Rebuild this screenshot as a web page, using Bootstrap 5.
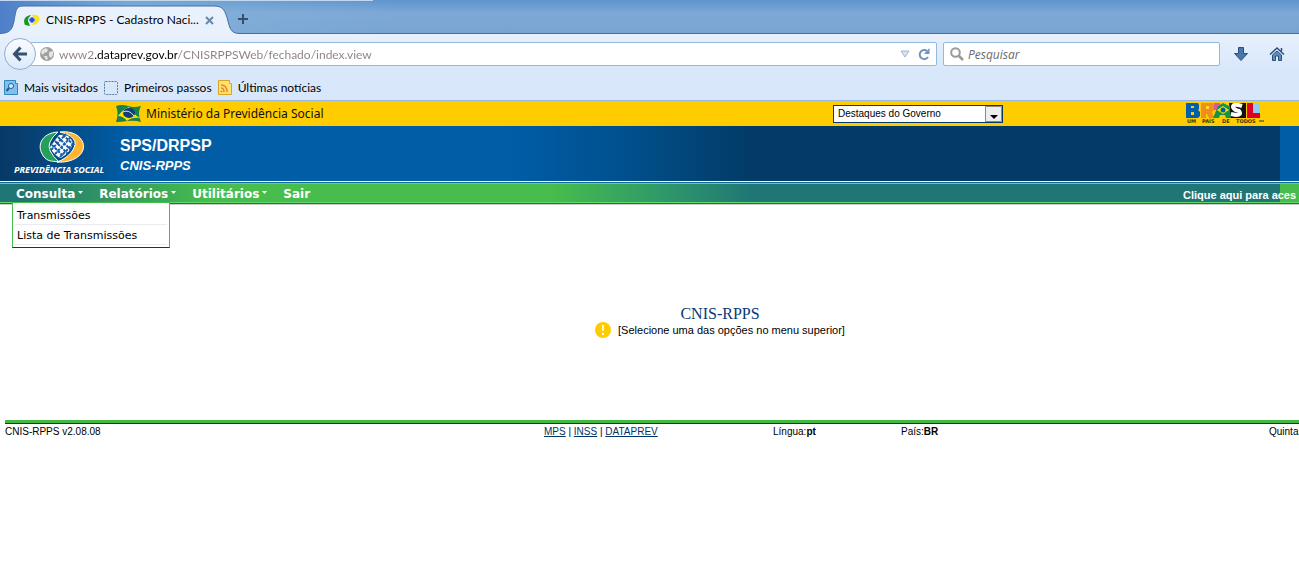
<!DOCTYPE html>
<html lang="pt-BR">
<head>
<meta charset="utf-8">
<meta name="viewport" content="width=device-width, initial-scale=1">
<title>CNIS-RPPS - Cadastro Nacional</title>
<link rel="stylesheet" href="https://cdn.jsdelivr.net/npm/bootstrap@5.3.0/dist/css/bootstrap.min.css">
<style>
  body { background: #fff; color: #000; overflow-x: hidden; font-family: "Liberation Sans", Arial, sans-serif; font-size: 11px; line-height: 16px; }
  svg { display: block; flex-shrink: 0; }
  .chrome-ui { font-family: Lato, "Open Sans", sans-serif; font-size: 12px; }

  /* Browser frame */
  .tab-strip { height: 34px; background: linear-gradient(90deg, #4d80c8 0, #6495d0 60px, rgba(138,184,222,.5) 130px, rgba(110,160,212,0) 400px), linear-gradient(#5f94ce, #7ea8d6 40%, #78a4d4); border-bottom: 1px solid #426fa9; }
  .strip-glow { top: 0; left: 0; width: 373px; height: 1px; background: #c3d7ee; }
  .page-tab { width: 238px; height: 34px; margin-bottom: -1px; }
  .tab-shape { top: 0; left: 0; }
  .tab-label { left: 0; top: 6px; padding-left: 24px; gap: 6px; height: 28px; }
  .tab-title { width: 153px; white-space: nowrap; }
  .bare { background: none; border: 0; padding: 0; }
  .nav-area { background: linear-gradient(#e8f1fc, #d8e8fa 85%); padding: 4px 14px 0 4px; height: 41px; }
  .back-btn { width: 32px; height: 32px; border: 1px solid #90aecf; border-radius: 50%; background: linear-gradient(#fafcff, #dceafa); z-index: 2; }
  .url-box, .search-box { height: 24px; border: 1px solid #94b8de; border-radius: 2px; background: #fff; }
  .url-box { margin-left: -6px; padding: 0 6px 0 10px; border-left: 0; }
  .search-box { width: 277px; margin-left: 6px; padding-left: 6px; }
  .nav-tools { width: 65px; padding-left: 14px; }
  .field { border: 0; outline: 0; padding: 0; background: none; min-width: 0; height: 20px; }
  .url-text { margin-left: 5px; background: linear-gradient(90deg, #8c8088 36px, #000 36px, #000 118px, #8c8088 118px); -webkit-background-clip: text; background-clip: text; -webkit-text-fill-color: transparent; }
  .search-text { font-family: "Open Sans", sans-serif; }
  .search-text::placeholder { color: #6b6b6b; font-style: italic; opacity: 1; }
  .bookmarks { height: 26px; background: #d8e8fa; border-bottom: 1px solid #93b8e6; padding-left: 4px; }
  .bookmarks a { color: #000; gap: 6px; margin-right: 6px; }

  /* Government bar */
  .gov-bar { height: 25px; background: #fc0; padding: 0 35px 0 115px; }
  .ministry { font-family: "Noto Sans", sans-serif; font-size: 12px; color: #111; }
  .gov-select { width: 170px; height: 18px; margin-left: auto; margin-right: 183px; border: 1px solid #063a66; border-radius: 0; padding: 0 0 0 4px; font-size: 10px; line-height: 14px; appearance: none; color: #000;
    background: #fff url("data:image/svg+xml,%3Csvg xmlns='http://www.w3.org/2000/svg' width='17' height='16'%3E%3Cpath d='M.5 .5h16v15H.5z' fill='%23eee' stroke='%23888'/%3E%3Cpath d='M5 9h8L9 13z'/%3E%3C/svg%3E") no-repeat right center; }

  /* System header */
  .sys-head { height: 55px; background: linear-gradient(90deg, #073967 0, #073f70 25px, #005da6 125px, #005da6 510px, #00518f 620px, #033b66 750px, #033b66) no-repeat #005da6; background-size: 1280px 100%; color: #fff; padding-left: 14px; }
  .sys-names { padding: 10px 0 0 14px; }
  .sys-title { font-size: 16px; line-height: 20px; font-weight: bold; }
  .sys-sub { font-size: 13px; line-height: 20px; font-weight: bold; font-style: italic; }
  .menu-rule { border-top: 1px solid #fff; border-bottom: 1px solid #ccc; }
  .menu-frame { border: solid #0d6b96; border-width: 1px 0; }
  .menu-bar, .sub-menu { font-family: "DejaVu Sans", Verdana, sans-serif; }
  .menu-bar { height: 20px; border: solid #62d868; border-width: 1px 0; background: linear-gradient(90deg, #207575 0, #207575 20px, #46bd4c 210px, #46bd4c 550px, #2f9a68 660px, #207575 755px, #207575) no-repeat #46bd4c; background-size: 1280px 100%; padding-left: 12px; }
  .menu-bar button { color: #fff; font-weight: bold; font-size: 12px; line-height: 16px; gap: 3px; padding: 2px 8px 0 4px; white-space: nowrap; }
  .menu-bar button svg { margin-bottom: 4px; }
  .access-link { color: #fff; font-weight: bold; font-family: "Liberation Sans", Arial, sans-serif; white-space: nowrap; width: 116px; overflow: hidden; padding-top: 3px; }
  .sub-menu { display: block; top: 20px; left: 12px; width: 158px; min-width: 0; margin: 0; padding: 2px 2px; border: 1px solid #46bd4c; border-bottom-color: #033b66; border-radius: 0; font-size: 11px; }
  .sub-menu a { display: block; color: #000; text-decoration: none; line-height: 17px; padding: 2px 0 0 2px; border-bottom: 1px solid #eaeaf0; white-space: nowrap; }

  /* Content and footer */
  .welcome { padding: 101px 0 82px 141px; }
  .welcome h1 { font-family: "Liberation Serif", "Times New Roman", serif; font-size: 16px; line-height: 16px; margin: 0; color: #063a76; }
  .hint { gap: 7px; font-size: 11px; }
  .page-foot { margin-left: 5px; border-top: 3px solid #43b943; font-size: 10px; overflow: hidden; }
  .foot-grid { border-top: 1px solid #033b66; display: grid; grid-template-columns: 539fr 229fr 128fr 368fr 30fr; white-space: nowrap; }
  .foot-grid a { color: #036; }
</style>
</head>
<body>
<header class="chrome-ui">
  <div class="tab-strip d-flex position-relative">
    <div class="strip-glow position-absolute"></div>
    <div class="page-tab position-relative">
      <svg class="tab-shape position-absolute" width="240" height="34"><path d="M0 33.500C9 33 12 31 14 21C16 10 16 6 23 6H214C223 6 225 10 228 21C230 31 233 33.500 240 33.500V34H0Z" fill="#e9f2fc"/><path d="M0 33.500C9 33 12 31 14 21C16 10 16 6 23 6H214C223 6 225 10 228 21C230 31 233 33.500 240 33.500" fill="none" stroke="#426fa9"/></svg>
      <div class="tab-label position-absolute d-flex align-items-center">
        <svg width="16" height="16" viewBox="0 0 16 16"><path d="M7 3C0 4-1 9 1 13L6 14L5 11Q2 8 7 3Z" fill="#159a25"/><path d="M8 3C14 2 17 6 15 9C14 12 10 13 8 13Q12 9 8 3Z" fill="#f7e80f"/><circle cx="8" cy="8" r="3" fill="#a9bcff"/><path d="M5 8L8 5L11 8L8 11Z" fill="#3347d1"/></svg>
        <span class="tab-title">CNIS-RPPS - Cadastro Naci...</span>
        <button class="bare" type="button" aria-label="Fechar aba"><svg width="9" height="9" viewBox="0 0 9 9"><path d="M1 1L8 8M8 1L1 8" stroke="#6787ad" stroke-width="2"/></svg></button>
      </div>
    </div>
    <button class="bare align-self-center pt-1" type="button" aria-label="Nova aba"><svg width="10" height="10" viewBox="0 0 10 10"><path d="M5 0V10M0 5H10" stroke="#34506f" stroke-width="2"/></svg></button>
  </div>

  <div class="nav-area d-flex align-items-start">
    <button class="back-btn d-flex align-items-center justify-content-center p-0 position-relative" type="button" aria-label="Voltar"><svg width="16" height="16" viewBox="0 0 16 16"><path d="M8.500 1.500L2.500 8L8.500 14.500M3 8H15" fill="none" stroke="#34526f" stroke-width="3"/></svg></button>
    <div class="url-box d-flex align-items-center flex-grow-1 mt-1">
      <svg width="14" height="14" viewBox="0 0 14 14"><circle cx="7" cy="7" r="7" fill="#a0a0a0"/><path d="M2 3L6 1L8 3L7 5L4 6L3 8L1 6ZM9 5L13 4L13 8L11 11L9 9ZM4 9L7 9L8 12L6 13Z" fill="#e4e4e4"/></svg>
      <input class="field url-text flex-grow-1" type="text" aria-label="Endereço" value="www2.dataprev.gov.br/CNISRPPSWeb/fechado/index.view">
      <button class="bare" type="button" aria-label="Histórico"><svg width="10" height="8" viewBox="0 0 10 8"><path d="M1 1H9L5 7Z" fill="#dae3f4" stroke="#a0b6d9"/></svg></button>
      <button class="bare ms-2" type="button" aria-label="Recarregar"><svg width="12" height="12" viewBox="0 0 12 12"><path d="M9 3A4.500 4.500 0 1 0 10 9" fill="none" stroke="#7095bd" stroke-width="2"/><path d="M11.500 0V6H6Z" fill="#7095bd"/></svg></button>
    </div>
    <div class="search-box d-flex align-items-center mt-1">
      <svg width="14" height="14" viewBox="0 0 14 14"><circle cx="5.500" cy="5.500" r="4.300" fill="none" stroke="#999" stroke-width="2"/><path d="M8.500 8.500L13 13" stroke="#999" stroke-width="2.500"/></svg>
      <input class="field search-text flex-grow-1 ms-1" type="text" placeholder="Pesquisar" aria-label="Pesquisar">
    </div>
    <div class="nav-tools d-flex align-items-center justify-content-between mt-2">
      <button class="bare" type="button" aria-label="Downloads"><svg width="14" height="16" viewBox="0 0 14 16"><path d="M4.500 1.500H9.500V7.500H13.500L7 14.500L.5 7.500H4.500Z" fill="#4a77ab" stroke="#2d5077"/></svg></button>
      <button class="bare" type="button" aria-label="Página inicial"><svg width="16" height="16" viewBox="0 0 16 16"><path d="M3.500 9L8 5L12.500 9V14.500H9.500V10H6.500V14.500H3.500Z" fill="#5f8dc0" stroke="#2d5077"/><path d="M1 8.500L8 2L15 8.500M12.500 2V5" fill="none" stroke="#2d5077" stroke-width="1.500"/></svg></button>
    </div>
  </div>

  <nav class="bookmarks d-flex align-items-center" aria-label="Favoritos">
    <a class="d-flex align-items-center text-decoration-none" href="#"><svg width="14" height="16" viewBox="0 0 14 16"><path d="M.5 .5H11.500V3.500H13.500V14.500H.5Z" fill="#7dc1ec" stroke="#3584bd"/><circle cx="7" cy="6" r="2.500" fill="#d8effc" stroke="#1d5a94"/><path d="M5 8L2.500 11" stroke="#1d5a94" stroke-width="2"/></svg>Mais visitados</a>
    <a class="d-flex align-items-center text-decoration-none" href="#"><svg width="14" height="14" viewBox="0 0 14 14"><rect x=".5" y=".5" width="13" height="13" rx="1" fill="none" stroke="#597a9f" stroke-dasharray="2 1"/></svg>Primeiros passos</a>
    <a class="d-flex align-items-center text-decoration-none" href="#"><svg width="14" height="16" viewBox="0 0 14 16"><path d="M.5 .5H11.500V3.500H13.500V14.500H.5Z" fill="#ffe176" stroke="#d9a520"/><path d="M3 5Q9 5 9 12M3 8Q6 8 6 12" fill="none" stroke="#ee861c" stroke-width="1.500"/><circle cx="3.500" cy="11.500" r="1" fill="#ee861c"/></svg>Últimas notícias</a>
  </nav>
</header>

<div class="gov-bar d-flex align-items-center">
  <svg width="27" height="19" viewBox="0 0 27 19"><path d="M1 2Q7 0 13 2T26 2Q22 9 26 18Q20 16 13 17T1 18Q4 9 1 2Z" fill="#16824c"/><path d="M3 12Q8 5 14 3Q18 10 25 14Q17 13 12 17Q8 12 3 12Z" fill="#fd0"/><ellipse cx="14" cy="9" rx="6" ry="5" fill="#123d78"/><path d="M8 8Q14 5 19 12" fill="none" stroke="#d4e7ed"/></svg>
  <span class="ministry ms-1">Ministério da Previdência Social</span>
  <select class="gov-select" aria-label="Destaques do Governo"><option>Destaques do Governo</option></select>
  <svg width="78" height="21" viewBox="0 0 78 21" role="img" aria-label="Brasil, um país de todos">
    <path d="M0 0H12L13 2V6L12 7L14 9V13L12 15H0Z" fill="#0060ad"/><path d="M5 3H8V5H5ZM5 9H8V12H5Z" fill="#fc0"/>
    <path d="M15 0H27L28 2V7L26 9L28 15H23L21 11H20V15H15Z" fill="#f28c1e"/><path d="M20 3H23V6H20Z" fill="#fd3"/>
    <path d="M28 0H34V7H28Z" fill="#e2569a"/><path d="M27 15L32 3L37 0L43 3L46 15H40L39 12H34L33 15Z" fill="#159447"/><path d="M31 7L37 3L43 7L37 11Z" fill="#fd0"/><circle cx="37" cy="7" r="2.500" fill="#0060ad"/>
    <path d="M43 0H60V15H45Z" fill="#111"/><path d="M56 3Q47 0 47 4Q48 7 53 8Q56 12 50 12L45 11" fill="none" stroke="#fff" stroke-width="4"/>
    <path d="M61 0H74V15H61Z" fill="#e00025"/><path d="M67 0H74V10H67Z" fill="#8dcdf5"/>
    <text y="20" font-family="DejaVu Sans" font-weight="bold" font-size="5" fill="#3c3300"><tspan x="1">UM</tspan><tspan x="16">PAÍS</tspan><tspan x="36">DE</tspan><tspan x="50">TODOS</tspan></text><path d="M73 18H78" stroke="#063a66"/>
  </svg>
</div>

<div class="sys-head d-flex">
  <svg class="mt-1" width="92" height="45" viewBox="0 0 92 45" role="img" aria-label="Previdência Social">
    <path d="M44 2C27 3 21 17 31 28C35 32 40 31 45 32Q32 20 36 12Q38 7 44 2Z" fill="#25a05a" stroke="#fff"/><path d="M46 2C62 0 72 10 69 20C66 29 53 33 43 32C55 28 62 18 61 12Q59 5 46 2Z" fill="#ffb52f" stroke="#fff"/><path d="M36 17L45 5Q56 3 59 13Q56 23 47 28Q40 26 36 17Z" fill="#fff"/><path d="M38 15L50 27M41 11L54 24M44 7L57 20M49 5L60 15M37 20L52 4M41 24L57 7M46 27L60 13" stroke="#145ca6" stroke-width="2" stroke-dasharray="3 1"/>
    <text x="0" y="43" fill="#fff" font-family="Noto Sans" font-size="9" font-weight="bold" font-style="italic">PREVIDÊNCIA SOCIAL</text>
  </svg>
  <div class="sys-names"><div class="sys-title">SPS/DRPSP</div><div class="sys-sub">CNIS-RPPS</div></div>
</div>

<div class="menu-rule position-relative">
  <div class="menu-frame">
    <nav class="menu-bar d-flex">
      <button class="bare d-flex align-items-center" type="button" aria-expanded="true">Consulta <svg width="5" height="3" viewBox="0 0 5 3"><path d="M0 0H5L2.500 3Z" fill="#fff"/></svg></button>
      <button class="bare d-flex align-items-center ms-1" type="button">Relatórios <svg width="5" height="3" viewBox="0 0 5 3"><path d="M0 0H5L2.500 3Z" fill="#fff"/></svg></button>
      <button class="bare d-flex align-items-center ms-1" type="button">Utilitários <svg width="5" height="3" viewBox="0 0 5 3"><path d="M0 0H5L2.500 3Z" fill="#fff"/></svg></button>
      <button class="bare d-flex align-items-center ms-1" type="button">Sair</button>
      <a class="access-link ms-auto text-decoration-none" href="#">Clique aqui para aces</a>
    </nav>
  </div>
  <ul class="dropdown-menu sub-menu list-unstyled">
    <li><a href="#">Transmissões</a></li>
    <li><a href="#">Lista de Transmissões</a></li>
  </ul>
</div>

<main class="welcome d-flex flex-column align-items-center">
  <h1>CNIS-RPPS</h1>
  <div class="hint d-flex align-items-center">
    <svg width="16" height="16" viewBox="0 0 16 16"><circle cx="8" cy="8" r="8" fill="#fc0"/><path d="M7 3H9L8.700 9H7.300ZM7 11H9V13H7Z" fill="#fff"/></svg>
    <span>[Selecione uma das opções no menu superior]</span>
  </div>
</main>

<footer class="page-foot">
  <div class="foot-grid">
    <span>CNIS-RPPS v2.08.08</span>
    <span><a href="#">MPS</a> | <a href="#">INSS</a> | <a href="#">DATAPREV</a></span>
    <span>Língua:<b>pt</b></span>
    <span>País:<b>BR</b></span>
    <span>Quinta</span>
  </div>
</footer>
<script src="https://cdn.jsdelivr.net/npm/bootstrap@5.3.0/dist/js/bootstrap.bundle.min.js"></script>
</body>
</html>
